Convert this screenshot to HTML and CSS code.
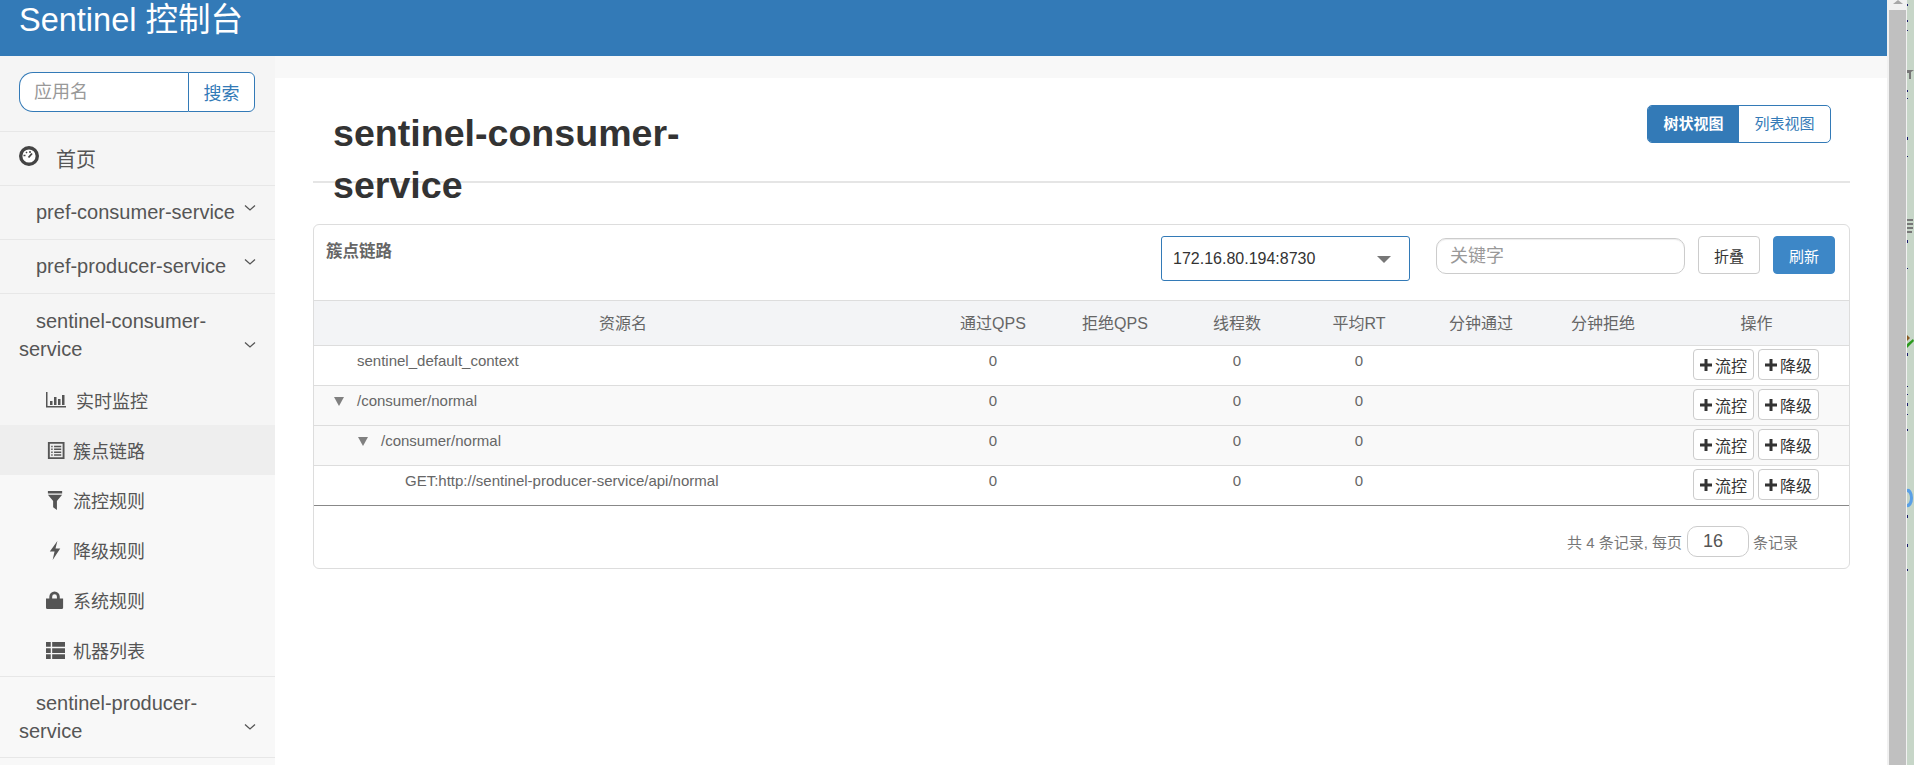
FILE: index.html
```html
<!DOCTYPE html>
<html>
  <head>
    <title>Sentinel 控制台</title>
    <link rel="stylesheet" href="styles.css">
  </head>
  <body>
    <div class="window">
      <div class="app">
        <header class="navbar">Sentinel 控制台</header>
        <div class="layout">
          <nav class="sidebar">
            <form class="search">
              <input class="search-input" type="text" placeholder="应用名" />
              <button class="search-btn" type="button">搜索</button>
            </form>
            <a class="home">
              <svg class="home-icon" viewBox="0 0 20 20">
                <circle cx="10" cy="10" r="8.3" fill="#fff" stroke="#444" stroke-width="3.4" />
                <path d="M9.500 11.500 13 7.500" stroke="#444" stroke-width="1.8" />
                <path d="M4.500 9.500h2M7 6l1 1M11 5v2" stroke="#444" stroke-width="1.500" />
              </svg>
              <span>首页</span>
            </a>
            <a class="app-row"><span class="app-name">pref-consumer-service</span><svg class="chevron" viewBox="0 0 12 8"><path d="M1 1.5 6 6l5-4.5" /></svg></a>
            <a class="app-row"><span class="app-name">pref-producer-service</span><svg class="chevron" viewBox="0 0 12 8"><path d="M1 1.5 6 6l5-4.5" /></svg></a>
            <a class="app-row open"><span class="app-name">sentinel-consumer-service</span><svg class="chevron" viewBox="0 0 12 8"><path d="M1 1.5 6 6l5-4.5" /></svg></a>
            <ul class="submenu">
              <li class="sub-row">
                <svg class="sub-icon chart" viewBox="0 0 20 20"><path d="M0 2h1.500v14H20v1.500H0zM4 11h2.500v4H4zM8 7h2.500v8H8zM12 9h2.500v6H12zM16 5h2.500v10H16z" /></svg>
                <span class="sub-text">实时监控</span>
              </li>
              <li class="sub-row active">
                <svg class="sub-icon" viewBox="0 0 20 20"><path fill-rule="evenodd" d="M2 1h17.500v18H2zM4 3v14h13.500V3zM5.500 5H7v1.500H5.500zM8.500 5H16v1.500H8.500zM5.500 8H7v1.500H5.500zM8.500 8H16v1.500H8.500zM5.500 11H7v1.500H5.500zM8.500 11H16v1.500H8.500zM5.500 14H7v1.500H5.500zM8.500 14H16v1.500H8.500z" /></svg>
                <span class="sub-text">簇点链路</span>
              </li>
              <li class="sub-row light">
                <svg class="sub-icon" viewBox="0 0 20 20"><path d="M2 0h15v2.500H2zM2 4h15l-5.500 6.500V20l-4-3v-6.500z" /></svg>
                <span class="sub-text">流控规则</span>
              </li>
              <li class="sub-row light">
                <svg class="sub-icon" viewBox="0 0 20 20"><path d="M12 0 4 11h5l-2 9 8-12h-5z" /></svg>
                <span class="sub-text">降级规则</span>
              </li>
              <li class="sub-row light">
                <svg class="sub-icon" viewBox="0 0 20 20"><path fill-rule="evenodd" d="M0 8h3.500V6a5.500 5.500 0 0 1 11 0v2H18v9.500q0 1.500-1.500 1.500h-15Q0 19 0 17.500zM6.500 8h5V6a2.500 2.500 0 0 0-5 0z" /></svg>
                <span class="sub-text">系统规则</span>
              </li>
              <li class="sub-row light">
                <svg class="sub-icon" viewBox="0 0 20 20"><path d="M0 1h5v5H0zM6.500 1H20v5H6.500zM0 7.500h5v5H0zM6.500 7.500H20v5H6.500zM0 14h5v5H0zM6.500 14H20v5H6.500z" /></svg>
                <span class="sub-text">机器列表</span>
              </li>
            </ul>
            <a class="app-row open last"><span class="app-name">sentinel-producer-service</span><svg class="chevron" viewBox="0 0 12 8"><path d="M1 1.5 6 6l5-4.5" /></svg></a>
          </nav>

          <main class="content">
            <div class="page-header">
              <h1 class="page-title">sentinel-consumer-service</h1>
              <div class="view-toggle">
                <a class="view-btn selected">树状视图</a>
                <a class="view-btn">列表视图</a>
              </div>
            </div>

            <section class="panel">
              <div class="panel-head">
                <div class="panel-title">簇点链路</div>
                <div class="machine-select">172.16.80.194:8730<span class="select-caret"></span></div>
                <input class="keyword" type="text" placeholder="关键字" />
                <button class="tool-btn" type="button">折叠</button>
                <button class="tool-btn primary" type="button">刷新</button>
              </div>

              <table class="resource-table">
                <colgroup>
                  <col class="col-name" />
                  <col class="col-num" span="6" />
                  <col class="col-ops" />
                </colgroup>
                <thead>
                  <tr>
                    <th>资源名</th>
                    <th>通过QPS</th>
                    <th>拒绝QPS</th>
                    <th>线程数</th>
                    <th>平均RT</th>
                    <th>分钟通过</th>
                    <th>分钟拒绝</th>
                    <th>操作</th>
                  </tr>
                </thead>
                <tbody>
                  <tr>
                    <td class="name-cell level-0"><span class="tree-gap"></span>sentinel_default_context</td>
                    <td>0</td><td></td><td>0</td><td>0</td><td></td><td></td>
                    <td class="ops-cell">
                      <button class="op-btn" type="button"><svg class="plus" viewBox="0 0 12 12"><path d="M4.500 0h3v4.500H12v3H7.500V12h-3V7.500H0v-3h4.500z" /></svg>流控</button>
                      <button class="op-btn" type="button"><svg class="plus" viewBox="0 0 12 12"><path d="M4.500 0h3v4.500H12v3H7.500V12h-3V7.500H0v-3h4.500z" /></svg>降级</button>
                    </td>
                  </tr>
                  <tr class="striped">
                    <td class="name-cell level-0"><span class="tree-arrow"></span>/consumer/normal</td>
                    <td>0</td><td></td><td>0</td><td>0</td><td></td><td></td>
                    <td class="ops-cell">
                      <button class="op-btn" type="button"><svg class="plus" viewBox="0 0 12 12"><path d="M4.500 0h3v4.500H12v3H7.500V12h-3V7.500H0v-3h4.500z" /></svg>流控</button>
                      <button class="op-btn" type="button"><svg class="plus" viewBox="0 0 12 12"><path d="M4.500 0h3v4.500H12v3H7.500V12h-3V7.500H0v-3h4.500z" /></svg>降级</button>
                    </td>
                  </tr>
                  <tr class="striped">
                    <td class="name-cell level-1"><span class="tree-arrow"></span>/consumer/normal</td>
                    <td>0</td><td></td><td>0</td><td>0</td><td></td><td></td>
                    <td class="ops-cell">
                      <button class="op-btn" type="button"><svg class="plus" viewBox="0 0 12 12"><path d="M4.500 0h3v4.500H12v3H7.500V12h-3V7.500H0v-3h4.500z" /></svg>流控</button>
                      <button class="op-btn" type="button"><svg class="plus" viewBox="0 0 12 12"><path d="M4.500 0h3v4.500H12v3H7.500V12h-3V7.500H0v-3h4.500z" /></svg>降级</button>
                    </td>
                  </tr>
                  <tr>
                    <td class="name-cell level-2"><span class="tree-gap"></span>GET:http://sentinel-producer-service/api/normal</td>
                    <td>0</td><td></td><td>0</td><td>0</td><td></td><td></td>
                    <td class="ops-cell">
                      <button class="op-btn" type="button"><svg class="plus" viewBox="0 0 12 12"><path d="M4.500 0h3v4.500H12v3H7.500V12h-3V7.500H0v-3h4.500z" /></svg>流控</button>
                      <button class="op-btn" type="button"><svg class="plus" viewBox="0 0 12 12"><path d="M4.500 0h3v4.500H12v3H7.500V12h-3V7.500H0v-3h4.500z" /></svg>降级</button>
                    </td>
                  </tr>
                </tbody>
              </table>

              <div class="pager">
                <span>共 4 条记录, 每页</span>
                <input class="page-size" type="text" value="16" />
                <span>条记录</span>
              </div>
            </section>
          </main>
        </div>
      </div>

      <div class="scrollbar">
        <div class="scroll-arrow"></div>
        <div class="scroll-thumb"></div>
      </div>
      <svg class="desktop-edge" viewBox="0 0 7 765">
        <rect width="7" height="765" fill="#c7d6c8" />
        <path d="M0 4h1v2H0zM0 20h1v2H0zM0 30h1v1H0zM0 90h1v2H0zM0 98h1v1H0zM0 137h1v3H0zM0 156h1v1H0zM0 240h1v3H0zM0 268h1v1H0zM0 353h1v3H0zM0 386h1v1H0zM0 394h1v1H0zM0 403h1v3H0zM0 414h1v1H0zM0 429h1v2H0zM0 515h1v3H0zM0 544h1v3H0zM0 569h1v2H0z" fill="#1a1a6e" />
        <path d="M0 70h7l-3 2v7H2v-6H0z" fill="#777" />
        <path d="M0 219h6v2H0zM0 223h6v2H0zM0 227h6v2H0zM0 231h5v2H0z" fill="#777" />
        <path d="M0 344l6-5 1 2-7 7z" fill="#2c9a1e" />
        <path d="M0 335l3 3-3 3z" fill="#8a5a20" />
        <path d="M0 489a5 9 0 0 1 6 9 5 9 0 0 1-6 9v-3a3 6 0 0 0 3-6 3 6 0 0 0-3-6z" fill="#5aa0e6" />
      </svg>
    </div>
  </body>
</html>
```

FILE: styles.css
```css
* {
  box-sizing: border-box;
}

body {
  margin: 0;
  font-family: "Liberation Sans", "Noto Sans CJK SC", sans-serif;
  background-color: #fff;
  color: #555;
}

input,
button {
  font-family: inherit;
}

.window {
  display: flex;
  height: 765px;
  overflow: hidden;
}

.app {
  width: 1887px;
  flex: none;
}

.navbar {
  height: 56px;
  padding-left: 19px;
  background-color: #337ab7;
  color: #fff;
  font-size: 32.5px;
  line-height: 41px;
}

.layout {
  display: flex;
  height: 709px;
}

/* sidebar */
.sidebar {
  width: 275px;
  flex: none;
  background-color: #f8f8f8;
  font-size: 18px;
}

.search {
  display: flex;
  height: 76px;
  padding: 16px 19px 0;
  border-bottom: 1px solid #e7e7e7;
  background-color: #f5f5f5;
}

.search-input {
  width: 169px;
  height: 40px;
  padding: 0 14px;
  border: 1px solid #337ab7;
  border-right: none;
  border-radius: 14px 0 0 14px;
  background-color: #fff;
  font-size: 18px;
  outline: none;
}

.search-input::placeholder,
.keyword::placeholder {
  color: #999;
}

.search-btn {
  width: 67px;
  height: 40px;
  padding: 0;
  border: 1px solid #337ab7;
  border-radius: 0 6px 6px 0;
  background-color: #fff;
  color: #337ab7;
  font-size: 18px;
}

.home {
  display: flex;
  align-items: center;
  height: 54px;
  padding-left: 19px;
  border-bottom: 1px solid #e7e7e7;
  background-color: #f5f5f5;
  font-size: 20px;
}

.home-icon {
  width: 20px;
  height: 20px;
  margin: -6px 17px 0 0;
}

.app-row {
  display: flex;
  align-items: flex-end;
  height: 54px;
  padding: 12px 19px 13px;
  border-bottom: 1px solid #e7e7e7;
  background-color: #f5f5f5;
  font-size: 20px;
  line-height: 28px;
}

.app-row.open {
  height: 81px;
  padding: 13px 19px 12px;
  border-bottom: none;
}

.app-row.last {
  height: 82px;
  padding-top: 12px;
  background-color: #f8f8f8;
  border-top: 1px solid #e7e7e7;
  border-bottom: 1px solid #e7e7e7;
}

.app-name {
  flex: 1;
  text-indent: 17px;
}

.chevron {
  width: 12px;
  height: 8px;
  flex: none;
  margin-bottom: 14px;
  fill: none;
  stroke: #555;
  stroke-width: 1.3;
}

.submenu {
  margin: 0;
  padding: 0 0 1px;
  list-style: none;
}

.sub-row {
  display: flex;
  align-items: center;
  height: 50px;
  padding-left: 46px;
  background-color: #f5f5f5;
}

.sub-row.active {
  background-color: #eee;
}

.sub-row.light {
  background-color: #f8f8f8;
}

.sub-icon {
  width: 19px;
  height: 19px;
  flex: none;
  margin-right: 8px;
  fill: #555;
}

.sub-icon.chart {
  width: 20px;
  height: 20px;
  margin-right: 10px;
}

.sub-text {
  font-size: 18px;
}

/* content */
.content {
  flex: 1;
  padding: 22px 37px 0 38px;
  background: linear-gradient(#f8f8f8 22px, #fff 22px);
}

.page-header {
  display: flex;
  justify-content: space-between;
  align-items: flex-start;
  height: 105px;
  border-bottom: 2px solid #e5e5e5;
}

.page-title {
  width: 380px;
  margin: 29px 0 0;
  padding-left: 20px;
  color: #333;
  font-size: 37.6px;
  font-weight: bold;
  line-height: 52px;
}

.view-toggle {
  display: flex;
  height: 38px;
  margin: 27px 19px 0 0;
  border: 1px solid #337ab7;
  border-radius: 5px;
  overflow: hidden;
  font-size: 15px;
}

.view-btn {
  width: 91px;
  color: #337ab7;
  line-height: 36px;
  text-align: center;
}

.view-btn.selected {
  background-color: #337ab7;
  color: #fff;
  font-weight: bold;
}

.panel {
  height: 345px;
  margin-top: 41px;
  border: 1px solid #ddd;
  border-radius: 6px;
}

.panel-head {
  display: flex;
  align-items: flex-start;
  height: 75px;
  padding: 11px 14px 0 12px;
}

.panel-title {
  flex: 1;
  padding-top: 4px;
  color: #666;
  font-size: 16.5px;
  font-weight: bold;
  line-height: 22px;
}

.machine-select {
  position: relative;
  width: 249px;
  height: 45px;
  padding-left: 11px;
  border: 1px solid #337ab7;
  border-radius: 3px;
  color: #333;
  font-size: 16px;
  line-height: 43px;
}

.select-caret {
  position: absolute;
  top: 19px;
  right: 18px;
  border-style: solid;
  border-width: 7px 7px 0;
  border-color: #777 transparent transparent;
}

.keyword {
  width: 249px;
  height: 36px;
  margin: 2px 13px 0 26px;
  padding: 0 13px;
  border: 1px solid #ccc;
  border-radius: 10px;
  font-size: 18px;
  box-shadow: inset 0 1px 1px rgba(0, 0, 0, 0.075);
  outline: none;
}

.tool-btn {
  width: 62px;
  height: 38px;
  padding: 0;
  border: 1px solid #ccc;
  border-radius: 4px;
  background-color: #fff;
  color: #333;
  font-size: 15px;
}

.tool-btn.primary {
  margin-left: 13px;
  border-color: #3d87c7;
  background-color: #3d87c7;
  color: #fff;
}

.resource-table {
  width: 100%;
  border-collapse: collapse;
  table-layout: fixed;
  font-size: 15px;
  color: #666;
}

.col-name {
  width: 618px;
}

.col-num {
  width: 122px;
}

.resource-table th {
  height: 45px;
  padding: 0 0 2px;
  background-color: #f3f4f6;
  border-top: 1px solid #ddd;
  border-bottom: 1px solid #ddd;
  font-size: 16px;
  font-weight: normal;
  text-align: center;
}

.resource-table td {
  height: 40px;
  padding: 5px 0 0;
  border-bottom: 1px solid #ddd;
  line-height: 20px;
  text-align: center;
  vertical-align: top;
}

.resource-table tbody tr:last-child td {
  border-bottom: 1px solid #888;
}

.striped td {
  background-color: #f9f9f9;
}

.resource-table .name-cell {
  text-align: left;
}

.resource-table .level-0 {
  padding-left: 19px;
}

.resource-table .level-1 {
  padding-left: 43px;
}

.resource-table .level-2 {
  padding-left: 67px;
}

.tree-gap,
.tree-arrow {
  display: inline-block;
  width: 24px;
}

.tree-arrow::before {
  content: "";
  display: inline-block;
  margin-left: 1px;
  border-style: solid;
  border-width: 9px 5px 0;
  border-color: #808080 transparent transparent;
}

.resource-table .ops-cell {
  padding: 3px 0 0 29px;
  text-align: left;
  font-size: 0;
}

.op-btn {
  display: inline-flex;
  align-items: center;
  justify-content: center;
  width: 61px;
  height: 31px;
  margin-right: 4px;
  padding: 0;
  border: 1px solid #ccc;
  border-radius: 4px;
  background-color: #fff;
  color: #333;
  font-size: 16px;
}

.plus {
  width: 12px;
  height: 12px;
  margin-right: 3px;
  fill: #333;
}

.pager {
  display: flex;
  justify-content: flex-end;
  align-items: center;
  padding: 20px 51px 0 0;
  color: #777;
  font-size: 15px;
}

.page-size {
  width: 62px;
  height: 31px;
  margin: 0 4px 0 5px;
  padding: 0 0 0 15px;
  border: 1px solid #ccc;
  border-radius: 10px;
  color: #555;
  font-size: 18px;
  outline: none;
}

/* right edge of the browser window */
.scrollbar {
  width: 20px;
  flex: none;
  padding: 0 1px 0 2px;
  background-color: #f1f1f1;
}

.scroll-arrow {
  width: 0;
  margin: 0 auto 6px;
  border-style: solid;
  border-width: 0 5px 4px;
  border-color: transparent transparent #a8a8a8;
}

.scroll-thumb {
  height: 755px;
  background-color: #c0c0c0;
}

.desktop-edge {
  width: 7px;
  height: 765px;
  flex: none;
}
```
